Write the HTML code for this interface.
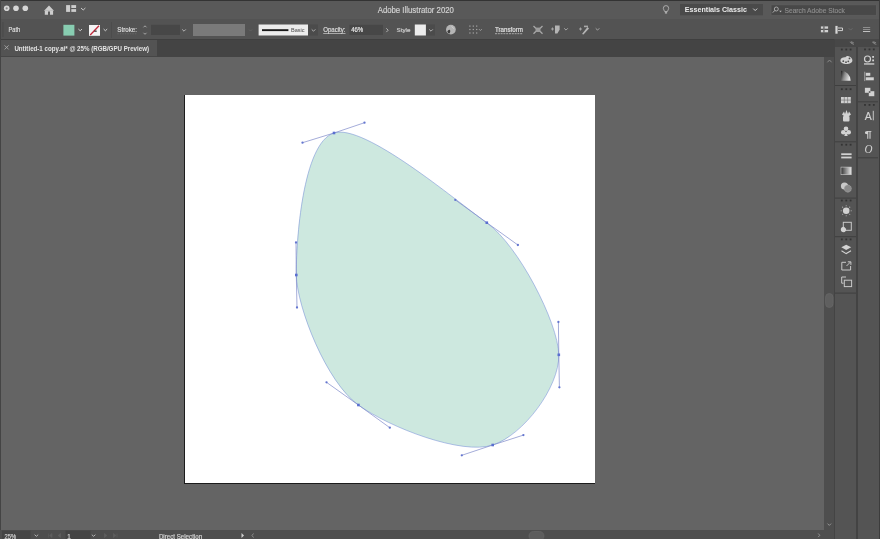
<!DOCTYPE html>
<html><head><meta charset="utf-8">
<style>
*{margin:0;padding:0}
html,body{width:880px;height:539px;overflow:hidden;background:#505050}
svg{display:block;font-family:"Liberation Sans", sans-serif;will-change:transform;filter:blur(0.3px)}
</style></head><body>
<svg width="880" height="539" viewBox="0 0 880 539">
<rect x="0" y="0" width="880" height="539" fill="#646464" />
<rect x="0" y="0" width="880" height="19" fill="#595959" />
<rect x="0" y="0" width="880" height="1" fill="#333333" />
<rect x="0" y="19" width="880" height="20" fill="#535353" />
<rect x="0" y="39" width="834" height="18" fill="#444444" />
<rect x="0" y="39" width="880" height="1" fill="#3f3f3f" />
<rect x="0" y="40" width="157" height="16.2" fill="#535353" />
<rect x="1" y="57" width="823" height="473" fill="#646464" />
<rect x="0" y="0" width="1" height="539" fill="#444444" />
<rect x="824" y="57" width="10" height="482" fill="#4e4e4e" />
<rect x="0" y="530" width="824" height="9" fill="#4e4e4e" />
<rect x="834" y="39" width="46" height="8" fill="#474747" />
<rect x="834" y="47" width="46" height="492" fill="#545454" />
<rect x="834" y="39" width="1" height="500" fill="#444444" />
<rect x="856.3" y="47" width="1.4" height="492" fill="#3d3d3d" />
<rect x="879" y="0" width="1" height="539" fill="#3c3c3c" />
<circle cx="6.7" cy="8.3" r="2.8" fill="#d6d6d6"/>
<circle cx="16.0" cy="8.3" r="2.8" fill="#d6d6d6"/>
<circle cx="25.3" cy="8.3" r="2.8" fill="#d6d6d6"/>
<circle cx="6.7" cy="8.3" r="1.1" fill="#8a8a8a"/>
<path d="M44,10.8 L49,5.4 L54,10.8 Z" fill="#cdcdcd"/>
<path d="M44.8,10.6 H53.1 V14.8 H50 V11.6 H48 V14.8 H44.8 Z" fill="#cdcdcd"/>
<rect x="66.1" y="5.1" width="4" height="6.8" fill="#cdcdcd" />
<rect x="71.3" y="5.1" width="4.8" height="2.9" fill="#cdcdcd" />
<rect x="71.3" y="9.1" width="4.8" height="2.8" fill="#cdcdcd" />
<path d="M81.0,8.0 L83.2,10.0 L85.4,8.0" fill="none" stroke="#c8c8c8" stroke-width="1"/>
<text x="377.7" y="13" font-size="8.4" fill="#d2d2d2" font-weight="normal" stroke="#d2d2d2" stroke-width="0.18" textLength="76.2" lengthAdjust="spacingAndGlyphs" >Adobe Illustrator 2020</text>
<path d="M666,5.6 a2.7,2.7 0 0 1 2.7,2.7 c0,1.3 -1.1,2 -1.3,3.2 h-2.8 c-0.2,-1.2 -1.3,-1.9 -1.3,-3.2 a2.7,2.7 0 0 1 2.7,-2.7 z" fill="none" stroke="#bdbdbd" stroke-width="0.8"/>
<rect x="664.9" y="12.2" width="2.2" height="1.3" fill="#bdbdbd" />
<rect x="680" y="4" width="83" height="11.3" fill="#4a4a4a" />
<text x="684.8" y="12.3" font-size="7.5" fill="#ebebeb" font-weight="bold" textLength="62.1" lengthAdjust="spacingAndGlyphs" >Essentials Classic</text>
<path d="M753.2,8.6 L755.2,10.6 L757.2,8.6" fill="none" stroke="#d0d0d0" stroke-width="1"/>
<rect x="771" y="4.8" width="105.6" height="10.5" fill="#484848" stroke="#5f5f5f" stroke-width="0.8"/>
<circle cx="776.3" cy="9" r="2" fill="none" stroke="#bdbdbd" stroke-width="0.8"/>
<path d="M774.9,10.4 L772.8,12.6" stroke="#bdbdbd" stroke-width="0.9"/>
<path d="M779.2,10.8 h2.6 l-1.3,1.4 z" fill="#bdbdbd"/>
<text x="784.5" y="12.6" font-size="7.6" fill="#8c8c8c" font-weight="normal" stroke="#8c8c8c" stroke-width="0.18" textLength="60.4" lengthAdjust="spacingAndGlyphs" >Search Adobe Stock</text>
<rect x="2.4" y="22" width="1" height="15" fill="#4a4a4a" />
<text x="8.6" y="32.1" font-size="6.5" fill="#dedede" font-weight="normal" stroke="#dedede" stroke-width="0.18" textLength="11.6" lengthAdjust="spacingAndGlyphs" >Path</text>
<rect x="63.4" y="24.8" width="11" height="10.8" fill="#88cdb1" />
<path d="M78.4,29.049999999999997 L80.2,30.75 L82.0,29.049999999999997" fill="none" stroke="#d0d0d0" stroke-width="1"/>
<rect x="89" y="25" width="11" height="10.8" fill="#f4f4f4" />
<path d="M90.2,35 L99,25.8" stroke="#c02a3c" stroke-width="1.3"/>
<rect x="94.3" y="30.6" width="2.4" height="1.1" fill="#1e1e1e" />
<path d="M103.60000000000001,29.049999999999997 L105.4,30.75 L107.2,29.049999999999997" fill="none" stroke="#d0d0d0" stroke-width="1"/>
<rect x="111" y="22" width="0.8" height="16" fill="#4b4b4b" />
<text x="117.3" y="32.2" font-size="6.5" fill="#dedede" font-weight="normal" stroke="#dedede" stroke-width="0.18" textLength="19.7" lengthAdjust="spacingAndGlyphs" >Stroke:</text>
<path d="M117.3,33.8 H137" stroke="#7c7c7c" stroke-width="0.5" stroke-dasharray="1.5,1"/>
<path d="M143.5,27.3 L145,25.8 L146.5,27.3 M143.5,32.8 L145,34.3 L146.5,32.8" fill="none" stroke="#bdbdbd" stroke-width="0.8"/>
<rect x="151" y="24.8" width="29" height="10.2" fill="#474747" />
<path d="M182.2,29.400000000000002 L184,31.2 L185.8,29.400000000000002" fill="none" stroke="#bdbdbd" stroke-width="0.9"/>
<rect x="193" y="24" width="52" height="12" fill="#7a7a7a" />
<path d="M249.0,29.55 L250.5,31.05 L252.0,29.55" fill="none" stroke="#666" stroke-width="0.8"/>
<rect x="258.6" y="24.5" width="49.4" height="11" fill="#ececec" />
<rect x="262" y="29.2" width="26.4" height="1.9" fill="#1a1a1a" />
<text x="291" y="32" font-size="5.8" fill="#4a4a4a" font-weight="normal" textLength="13.6" lengthAdjust="spacingAndGlyphs" >Basic</text>
<rect x="308" y="24.5" width="10" height="11" fill="#4b4b4b" />
<path d="M311.7,29.400000000000002 L313.5,31.2 L315.3,29.400000000000002" fill="none" stroke="#bdbdbd" stroke-width="0.9"/>
<text x="323.2" y="32.3" font-size="6.7" fill="#dedede" font-weight="normal" stroke="#dedede" stroke-width="0.18" textLength="22.3" lengthAdjust="spacingAndGlyphs" >Opacity:</text>
<rect x="323.2" y="33.3" width="22.3" height="0.7" fill="#cfcfcf" />
<rect x="349.5" y="24.8" width="33.5" height="10.2" fill="#474747" />
<text x="351.2" y="32.2" font-size="6.5" fill="#e6e6e6" font-weight="normal" stroke="#e6e6e6" stroke-width="0.18" textLength="12" lengthAdjust="spacingAndGlyphs" >46%</text>
<path d="M386.3,28.3 L388.2,30.2 L386.3,32.1" fill="none" stroke="#bdbdbd" stroke-width="0.9"/>
<text x="396.6" y="32.2" font-size="6.2" fill="#cfcfcf" font-weight="normal" stroke="#cfcfcf" stroke-width="0.18" textLength="13.9" lengthAdjust="spacingAndGlyphs" >Style</text>
<rect x="414.8" y="24.5" width="11.1" height="11" fill="#ececec" />
<rect x="426" y="24.5" width="9" height="11" fill="#4b4b4b" />
<path d="M429.2,29.400000000000002 L431,31.2 L432.8,29.400000000000002" fill="none" stroke="#bdbdbd" stroke-width="0.9"/>
<circle cx="450.9" cy="29.6" r="4.9" fill="#b4b4b4"/>
<path d="M447.3,31.5 q1,-2.2 2.8,-1.6 q0.6,1.6 -0.6,3.6 q-1.6,0 -2.2,-2 z" fill="#3c3c3c"/>
<path d="M451.5,26.5 q1.5,0.8 2.2,2.2" fill="none" stroke="#d8d8d8" stroke-width="0.8"/>
<rect x="469.29999999999995" y="25.5" width="1.2" height="1.2" fill="#a8a8a8" />
<rect x="469.29999999999995" y="28.9" width="1.2" height="1.2" fill="#a8a8a8" />
<rect x="469.29999999999995" y="32.4" width="1.2" height="1.2" fill="#a8a8a8" />
<rect x="472.7" y="25.5" width="1.2" height="1.2" fill="#a8a8a8" />
<rect x="472.7" y="28.9" width="1.2" height="1.2" fill="#a8a8a8" />
<rect x="472.7" y="32.4" width="1.2" height="1.2" fill="#a8a8a8" />
<rect x="476.09999999999997" y="25.5" width="1.2" height="1.2" fill="#a8a8a8" />
<rect x="476.09999999999997" y="28.9" width="1.2" height="1.2" fill="#a8a8a8" />
<rect x="476.09999999999997" y="32.4" width="1.2" height="1.2" fill="#a8a8a8" />
<path d="M478.9,29.05 L480.4,30.55 L481.9,29.05" fill="none" stroke="#a8a8a8" stroke-width="0.8"/>
<text x="495" y="32.2" font-size="6.7" fill="#e2e2e2" font-weight="normal" stroke="#e2e2e2" stroke-width="0.18" textLength="28" lengthAdjust="spacingAndGlyphs" >Transform</text>
<path d="M495,33.7 H523" stroke="#cfcfcf" stroke-width="0.7" stroke-dasharray="2,0.8"/>
<path d="M533.5,26 L536,28.5 M542.5,26 L540,28.5 M533.5,33.7 L536,31.2 M542.5,33.7 L540,31.2" stroke="#a8a8a8" stroke-width="1.3"/>
<rect x="535.5" y="27.6" width="5" height="4.4" fill="#9c9c9c" />
<path d="M551,29 h3 M552.5,27.5 v3" stroke="#a8a8a8" stroke-width="0.9"/>
<path d="M555,25.6 h4.6 v4.2 l-2.2,3.6 h-2.4 z" fill="#b4b4b4"/>
<path d="M564.2,28.3 L566,30.099999999999998 L567.8,28.3" fill="none" stroke="#b0b0b0" stroke-width="0.9"/>
<path d="M579,29 h3 M580.5,27.5 v3" stroke="#a8a8a8" stroke-width="0.9"/>
<path d="M582,34 L587.5,27 L589,28.5 L583.5,34.5 Z" fill="#b4b4b4"/>
<rect x="584" y="25.6" width="4" height="1.6" fill="#a8a8a8" />
<path d="M595.7,28.3 L597.5,30.099999999999998 L599.3,28.3" fill="none" stroke="#b0b0b0" stroke-width="0.9"/>
<rect x="820.9" y="26.4" width="2.4" height="2.3" fill="#d0d0d0" />
<rect x="824.5" y="26.4" width="3.6" height="2.3" fill="#d0d0d0" />
<rect x="820.9" y="30" width="2.4" height="2.3" fill="#d0d0d0" />
<rect x="824.5" y="30" width="3.6" height="2.3" fill="#d0d0d0" />
<rect x="823.6" y="25.6" width="0.7" height="7.4" fill="#8a8a8a" />
<rect x="835.4" y="25.9" width="2.2" height="7.8" fill="#d8d8d8" />
<path d="M838,28 H842.5 V30.6 H838" fill="none" stroke="#d0d0d0" stroke-width="1"/>
<path d="M848.8000000000001,28.3 L850.6,30.099999999999998 L852.4,28.3" fill="none" stroke="#707070" stroke-width="0.8"/>
<rect x="863" y="27" width="7.2" height="0.7" fill="#a8a8a8" />
<rect x="863" y="29" width="7.2" height="0.7" fill="#a8a8a8" />
<rect x="863" y="31.1" width="7.2" height="0.9" fill="#d0d0d0" />
<path d="M4.6,45.4 L8.6,49.4 M8.6,45.4 L4.6,49.4" stroke="#a8a8a8" stroke-width="0.9"/>
<text x="14.4" y="50.6" font-size="6.6" fill="#e4e4e4" font-weight="bold" textLength="134.6" lengthAdjust="spacingAndGlyphs" >Untitled-1 copy.ai* @ 25% (RGB/GPU Preview)</text>
<rect x="184" y="95" width="411" height="389" fill="#1c1c1c" />
<rect x="185" y="95" width="410" height="388" fill="#ffffff" />
<path d="M334,133 C364,123 455,200 487,223 C518,245 558,322 558.8,354.8 C559.4,387.3 523.4,435 492.7,445 C461.8,455.3 389.8,427.7 358.4,405 C326.5,382.3 297,307.5 296.3,275 C296,242.5 302.5,142.7 334,133 Z" fill="#cde8df" stroke="#7890d8" stroke-width="0.55"/>
<path d="M302.5,142.7 L334,133 L364.5,122.7" fill="none" stroke="#7d88c8" stroke-width="0.7"/>
<circle cx="302.5" cy="142.7" r="1.15" fill="#6476d0"/>
<circle cx="364.5" cy="122.7" r="1.15" fill="#6476d0"/>
<rect x="332.7" y="131.7" width="2.6" height="2.6" fill="#5a6fd0" />
<path d="M455.3,199.9 L486.8,222.7 L517.9,245" fill="none" stroke="#7d88c8" stroke-width="0.7"/>
<circle cx="455.3" cy="199.9" r="1.15" fill="#6476d0"/>
<circle cx="517.9" cy="245" r="1.15" fill="#6476d0"/>
<rect x="485.5" y="221.39999999999998" width="2.6" height="2.6" fill="#5a6fd0" />
<path d="M558.4,322 L558.8,354.8 L559.4,387.3" fill="none" stroke="#7d88c8" stroke-width="0.7"/>
<circle cx="558.4" cy="322" r="1.15" fill="#6476d0"/>
<circle cx="559.4" cy="387.3" r="1.15" fill="#6476d0"/>
<rect x="557.5" y="353.5" width="2.6" height="2.6" fill="#5a6fd0" />
<path d="M523.4,435.1 L492.7,445 L461.8,455.3" fill="none" stroke="#7d88c8" stroke-width="0.7"/>
<circle cx="523.4" cy="435.1" r="1.15" fill="#6476d0"/>
<circle cx="461.8" cy="455.3" r="1.15" fill="#6476d0"/>
<rect x="491.4" y="443.7" width="2.6" height="2.6" fill="#5a6fd0" />
<path d="M389.8,427.7 L358.4,405 L326.5,382.3" fill="none" stroke="#7d88c8" stroke-width="0.7"/>
<circle cx="389.8" cy="427.7" r="1.15" fill="#6476d0"/>
<circle cx="326.5" cy="382.3" r="1.15" fill="#6476d0"/>
<rect x="357.09999999999997" y="403.7" width="2.6" height="2.6" fill="#5a6fd0" />
<path d="M297,307.5 L296.3,275 L296,242.5" fill="none" stroke="#7d88c8" stroke-width="0.7"/>
<circle cx="297" cy="307.5" r="1.15" fill="#6476d0"/>
<circle cx="296" cy="242.5" r="1.15" fill="#6476d0"/>
<rect x="295.0" y="273.7" width="2.6" height="2.6" fill="#5a6fd0" />
<path d="M827.4,62.3 L829.5,60 L831.6,62.3" fill="none" stroke="#8a8a8a" stroke-width="1"/>
<rect x="825.5" y="293.5" width="7.6" height="14" fill="#5f5f5f" rx="3.8" stroke="#6a6a6a" stroke-width="0.6"/>
<path d="M827.5,523.6 L829.3,525.4 L831.0999999999999,523.6" fill="none" stroke="#9a9a9a" stroke-width="0.9"/>
<rect x="2" y="530.5" width="28.5" height="8.5" fill="#444444" />
<text x="4.5" y="539.2" font-size="6.3" fill="#d0d0d0" font-weight="normal" stroke="#d0d0d0" stroke-width="0.18" textLength="11.5" lengthAdjust="spacingAndGlyphs" >25%</text>
<path d="M34.6,534.7 L36.4,536.3 L38.199999999999996,534.7" fill="none" stroke="#bdbdbd" stroke-width="0.9"/>
<path d="M48.6,533.5 V537.5 M52,533.5 L49.6,535.5 L52,537.5 Z M60.5,533.5 L58.1,535.5 L60.5,537.5 Z" fill="#5e5e5e" stroke="#5e5e5e" stroke-width="0.7"/>
<rect x="65.5" y="530.5" width="25" height="8.5" fill="#444444" />
<text x="67.3" y="539.2" font-size="6.3" fill="#d0d0d0" font-weight="normal" stroke="#d0d0d0" stroke-width="0.18" >1</text>
<path d="M91.8,534.7 L93.6,536.3 L95.39999999999999,534.7" fill="none" stroke="#bdbdbd" stroke-width="0.9"/>
<path d="M104.5,533.5 L106.9,535.5 L104.5,537.5 Z M113.5,533.5 L115.9,535.5 L113.5,537.5 Z M117,533.5 V537.5" fill="#5e5e5e" stroke="#5e5e5e" stroke-width="0.7"/>
<text x="158.9" y="539.2" font-size="6.3" fill="#d6d6d6" font-weight="normal" stroke="#d6d6d6" stroke-width="0.18" textLength="43.2" lengthAdjust="spacingAndGlyphs" >Direct Selection</text>
<path d="M241.5,533 L244,535.5 L241.5,538 Z" fill="#d0d0d0"/>
<path d="M253.5,533.5 L252,535.5 L253.5,537.5" fill="none" stroke="#9a9a9a" stroke-width="0.8"/>
<rect x="529" y="531.5" width="15" height="9" fill="#5d5d5d" rx="4.5" stroke="#6a6a6a" stroke-width="0.6"/>
<path d="M818.2,533.5 L819.8,535.3 L818.2,537.1" fill="none" stroke="#a0a0a0" stroke-width="0.8"/>
<path d="M849.8,42 L852.6,43.2 M851,41.6 L853.8,42.8 M851.2,43.3 L854,44.4" fill="none" stroke="#9a9a9a" stroke-width="0.7"/>
<path d="M872.0999999999999,42 L874.9,43.2 M873.3,41.6 L876.0999999999999,42.8 M873.5,43.3 L876.3,44.4" fill="none" stroke="#9a9a9a" stroke-width="0.7"/>
<rect x="835" y="85" width="21" height="1" fill="#3f3f3f" />
<rect x="835" y="141.3" width="21" height="1" fill="#3f3f3f" />
<rect x="835" y="197.6" width="21" height="1" fill="#3f3f3f" />
<rect x="835" y="236.2" width="21" height="1" fill="#3f3f3f" />
<rect x="835" y="292.6" width="21" height="1" fill="#3f3f3f" />
<rect x="840.9" y="48.6" width="1.8" height="1.8" fill="#333333" /><rect x="845.4" y="48.6" width="1.8" height="1.8" fill="#333333" /><rect x="849.6999999999999" y="48.6" width="1.8" height="1.8" fill="#333333" />
<rect x="840.9" y="88.3" width="1.8" height="1.8" fill="#333333" /><rect x="845.4" y="88.3" width="1.8" height="1.8" fill="#333333" /><rect x="849.6999999999999" y="88.3" width="1.8" height="1.8" fill="#333333" />
<rect x="840.9" y="143.79999999999998" width="1.8" height="1.8" fill="#333333" /><rect x="845.4" y="143.79999999999998" width="1.8" height="1.8" fill="#333333" /><rect x="849.6999999999999" y="143.79999999999998" width="1.8" height="1.8" fill="#333333" />
<rect x="840.9" y="199.6" width="1.8" height="1.8" fill="#333333" /><rect x="845.4" y="199.6" width="1.8" height="1.8" fill="#333333" /><rect x="849.6999999999999" y="199.6" width="1.8" height="1.8" fill="#333333" />
<rect x="840.9" y="238.5" width="1.8" height="1.8" fill="#333333" /><rect x="845.4" y="238.5" width="1.8" height="1.8" fill="#333333" /><rect x="849.6999999999999" y="238.5" width="1.8" height="1.8" fill="#333333" />
<rect x="858" y="101.3" width="20" height="1" fill="#3f3f3f" />
<rect x="858" y="157.3" width="20" height="1" fill="#3f3f3f" />
<rect x="864.1" y="48.5" width="1.8" height="1.8" fill="#333333" /><rect x="868.6" y="48.5" width="1.8" height="1.8" fill="#333333" /><rect x="872.9" y="48.5" width="1.8" height="1.8" fill="#333333" />
<rect x="864.1" y="104.0" width="1.8" height="1.8" fill="#333333" /><rect x="868.6" y="104.0" width="1.8" height="1.8" fill="#333333" /><rect x="872.9" y="104.0" width="1.8" height="1.8" fill="#333333" />
<path d="M840.4,60.5 c0,-2.5 3,-3.5 5,-3.2 c1,-1.5 3,-1.7 4,-0.8 c2,1 3,2.5 3,4 c0,2.2 -2.5,3.5 -6,3.5 c-3.5,0 -6,-1.2 -6,-3.5 z" fill="#d2d2d2"/>
<circle cx="843.3" cy="61.2" r="0.9" fill="#505050"/>
<circle cx="846" cy="62.2" r="0.9" fill="#505050"/>
<circle cx="848.3" cy="61.3" r="0.9" fill="#505050"/>
<circle cx="849.5" cy="58.4" r="0.9" fill="#505050"/>
<defs><linearGradient id="cg" x1="0" y1="0" x2="1" y2="0.3"><stop offset="0" stop-color="#1e1e1e"/><stop offset="0.45" stop-color="#8a8a8a"/><stop offset="1" stop-color="#e4e4e4"/></linearGradient><linearGradient id="gr" x1="0" y1="0" x2="1" y2="0"><stop offset="0" stop-color="#333"/><stop offset="1" stop-color="#e6e6e6"/></linearGradient></defs>
<path d="M841,80.8 V70.8 A9.7,10 0 0 1 850.7,80.8 Z" fill="url(#cg)"/>
<rect x="841" y="97" width="9.8" height="6.2" fill="#cfcfcf" />
<path d="M841,100.1 H850.8 M844.3,97 V103.2 M847.6,97 V103.2" stroke="#6a6a6a" stroke-width="0.6"/>
<path d="M842,114.5 L844,111.5 L845,114 L846.5,110 L848,114 L849,111.5 L851,114.5 L849,116 H844 Z" fill="#d2d2d2"/>
<rect x="843" y="116" width="6.5" height="5.4" fill="#d2d2d2" rx="1"/>
<circle cx="846" cy="128.8" r="2.3" fill="#d2d2d2"/><circle cx="843.3" cy="132.2" r="2.3" fill="#d2d2d2"/><circle cx="848.7" cy="132.2" r="2.3" fill="#d2d2d2"/>
<path d="M845.3,132 L844.3,136 H847.7 L846.7,132 Z" fill="#d2d2d2"/>
<rect x="841.2" y="153.3" width="10.4" height="1.8" fill="#d2d2d2" />
<rect x="841.2" y="156.6" width="10.4" height="1.8" fill="#d2d2d2" />
<rect x="841" y="167.1" width="10.2" height="7.6" fill="url(#gr)" stroke="#cfcfcf" stroke-width="0.6"/>
<circle cx="844.5" cy="186" r="3.6" fill="#c8c8c8"/><circle cx="847.8" cy="188.6" r="3.6" fill="#8a8a8a" stroke="#c0c0c0" stroke-width="0.5" stroke-dasharray="0.8,0.6"/>
<circle cx="846.2" cy="210.7" r="3.3" fill="#d2d2d2"/>
<circle cx="851.20" cy="210.70" r="0.55" fill="#bdbdbd"/>
<circle cx="849.74" cy="214.24" r="0.55" fill="#bdbdbd"/>
<circle cx="846.20" cy="215.70" r="0.55" fill="#bdbdbd"/>
<circle cx="842.66" cy="214.24" r="0.55" fill="#bdbdbd"/>
<circle cx="841.20" cy="210.70" r="0.55" fill="#bdbdbd"/>
<circle cx="842.66" cy="207.16" r="0.55" fill="#bdbdbd"/>
<circle cx="846.20" cy="205.70" r="0.55" fill="#bdbdbd"/>
<circle cx="849.74" cy="207.16" r="0.55" fill="#bdbdbd"/>
<rect x="843.3" y="222.3" width="8" height="8" fill="none" stroke="#c8c8c8" stroke-width="1"/>
<path d="M840.8,229.5 c0,-2 2,-3 3.5,-2.5 l1.7,1.7 c0.5,1.5 -0.5,3.5 -2.5,3.5 c-1.5,0 -2.7,-1 -2.7,-2.7 z" fill="#d2d2d2"/>
<path d="M841.3,247.3 L846.2,244.8 L851.2,247.3 L846.2,249.9 Z" fill="#d2d2d2"/>
<path d="M841.5,250.8 L846.2,253.6 L851,250.8" fill="none" stroke="#d2d2d2" stroke-width="1.1"/>
<path d="M846,262.3 H841.8 V270 H850.6 V266" fill="none" stroke="#c8c8c8" stroke-width="1"/>
<path d="M846.5,266 L850.5,262 M847.8,261.8 H850.9 V264.9" fill="none" stroke="#c8c8c8" stroke-width="1"/>
<path d="M846,277 H841.7 V283.2 H843.6" fill="none" stroke="#c8c8c8" stroke-width="1"/>
<rect x="844.3" y="280.2" width="7.3" height="6.4" fill="none" stroke="#c8c8c8" stroke-width="1"/>
<circle cx="867.5" cy="59" r="3" fill="none" stroke="#d2d2d2" stroke-width="1.2"/>
<rect x="872.2" y="56" width="1.8" height="1.8" fill="#d2d2d2" />
<rect x="872.2" y="59.5" width="1.8" height="1.8" fill="#d2d2d2" />
<rect x="864" y="63.3" width="10.3" height="1.3" fill="#d2d2d2" />
<path d="M866.7,60.5 L868.5,58.3" stroke="#444" stroke-width="0.9"/>
<rect x="864.3" y="71.7" width="0.9" height="9.4" fill="#a8a8a8" />
<rect x="865.8" y="72.8" width="4.5" height="3" fill="#d2d2d2" />
<rect x="865.8" y="77.3" width="8" height="3" fill="#d2d2d2" />
<rect x="864.9" y="87.8" width="5.5" height="5" fill="#d2d2d2" />
<rect x="868.8" y="91.2" width="5.5" height="5" fill="#d2d2d2" />
<path d="M868.8,91.2 h1.6 v1.6 h-1.6 z" fill="#505050"/>
<text x="864.7" y="120.3" font-size="10.5" fill="#d2d2d2" font-weight="normal" stroke="#d2d2d2" stroke-width="0.18" textLength="7" lengthAdjust="spacingAndGlyphs" >A</text>
<rect x="872.8" y="110.8" width="0.9" height="9.5" fill="#d2d2d2" />
<text x="864.6" y="136.6" font-size="9.5" fill="#d2d2d2" font-weight="bold" textLength="7.3" lengthAdjust="spacingAndGlyphs" >¶</text>
<text x="864.6" y="153" font-size="11.5" font-style="italic" fill="#d2d2d2" font-family="Liberation Serif" textLength="8" lengthAdjust="spacingAndGlyphs">O</text>
</svg>
</body></html>
